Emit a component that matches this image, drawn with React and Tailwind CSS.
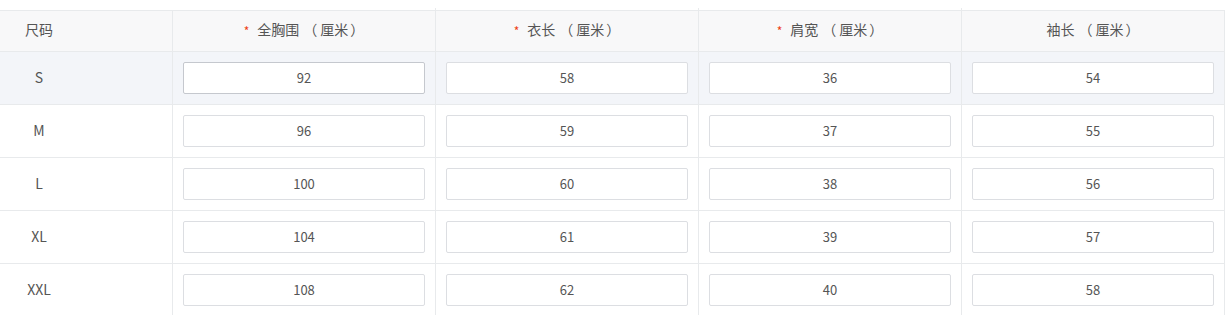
import React from 'react';

const columns = [
  { label: '全胸围', required: true },
  { label: '衣长', required: true },
  { label: '肩宽', required: true },
  { label: '袖长', required: false },
];

const rows = [
  { size: 'S', values: [92, 58, 36, 54] },
  { size: 'M', values: [96, 59, 37, 55] },
  { size: 'L', values: [100, 60, 38, 56] },
  { size: 'XL', values: [104, 61, 39, 57] },
  { size: 'XXL', values: [108, 62, 40, 58] },
];

function SizeInput({ value, hovered }) {
  return (
    <input
      readOnly
      value={value}
      className={`w-full h-[32px] rounded-[2px] border bg-white text-center text-[13px] text-[#555] pb-[2px] outline-none ${
        hovered ? 'border-[#c5c8ce]' : 'border-[#dcdee2]'
      }`}
    />
  );
}

export default function App() {
  return (
    <div
      className="bg-white pt-[10px] w-[1227px] h-[315px] overflow-hidden text-[#555]"
      style={{ fontFamily: '"Noto Sans CJK SC", "Noto Sans", sans-serif' }}
    >
      <div className="w-[1225px] border-t border-r border-[#e8eaec]">
        {/* Header */}
        <div className="grid grid-cols-[173px_263px_263px_263px_262px] h-[41px] bg-[#f8f8f9] border-b border-[#e8eaec] text-[14px]">
          <div className="flex items-center border-r border-[#e8eaec]">
            <span className="w-[78px] text-center -mt-[3px]">尺码</span>
          </div>
          {columns.map((col, i) => (
            <div
              key={col.label}
              className={`flex items-center justify-center -mt-[3px] ${i < columns.length - 1 ? 'border-r border-[#e8eaec]' : ''}`}
            >
              {col.required && <span className="text-[#ed4014] text-[12px] mr-[8px] mt-[2px]">*</span>}
              <span>{col.label}</span>
              <span className="ml-[4px]">（</span>
              <span className="ml-[3px]">厘米</span>
              <span className="ml-[2px]">）</span>
            </div>
          ))}
        </div>

        {/* Body */}
        {rows.map((row, r) => (
          <div
            key={row.size}
            className={`grid grid-cols-[173px_263px_263px_263px_262px] h-[53px] border-b border-[#e8eaec] ${
              r === 0 ? 'bg-[#f3f5f9]' : 'bg-white'
            }`}
          >
            <div className="flex items-center border-r border-[#e8eaec] text-[14px]">
              <span className="w-[78px] text-center -mt-[2px]">{row.size}</span>
            </div>
            {row.values.map((v, i) => (
              <div
                key={i}
                className={`flex items-center px-[10px] ${i < row.values.length - 1 ? 'border-r border-[#e8eaec]' : ''}`}
              >
                <SizeInput value={v} hovered={r === 0 && i === 0} />
              </div>
            ))}
          </div>
        ))}
      </div>
    </div>
  );
}
